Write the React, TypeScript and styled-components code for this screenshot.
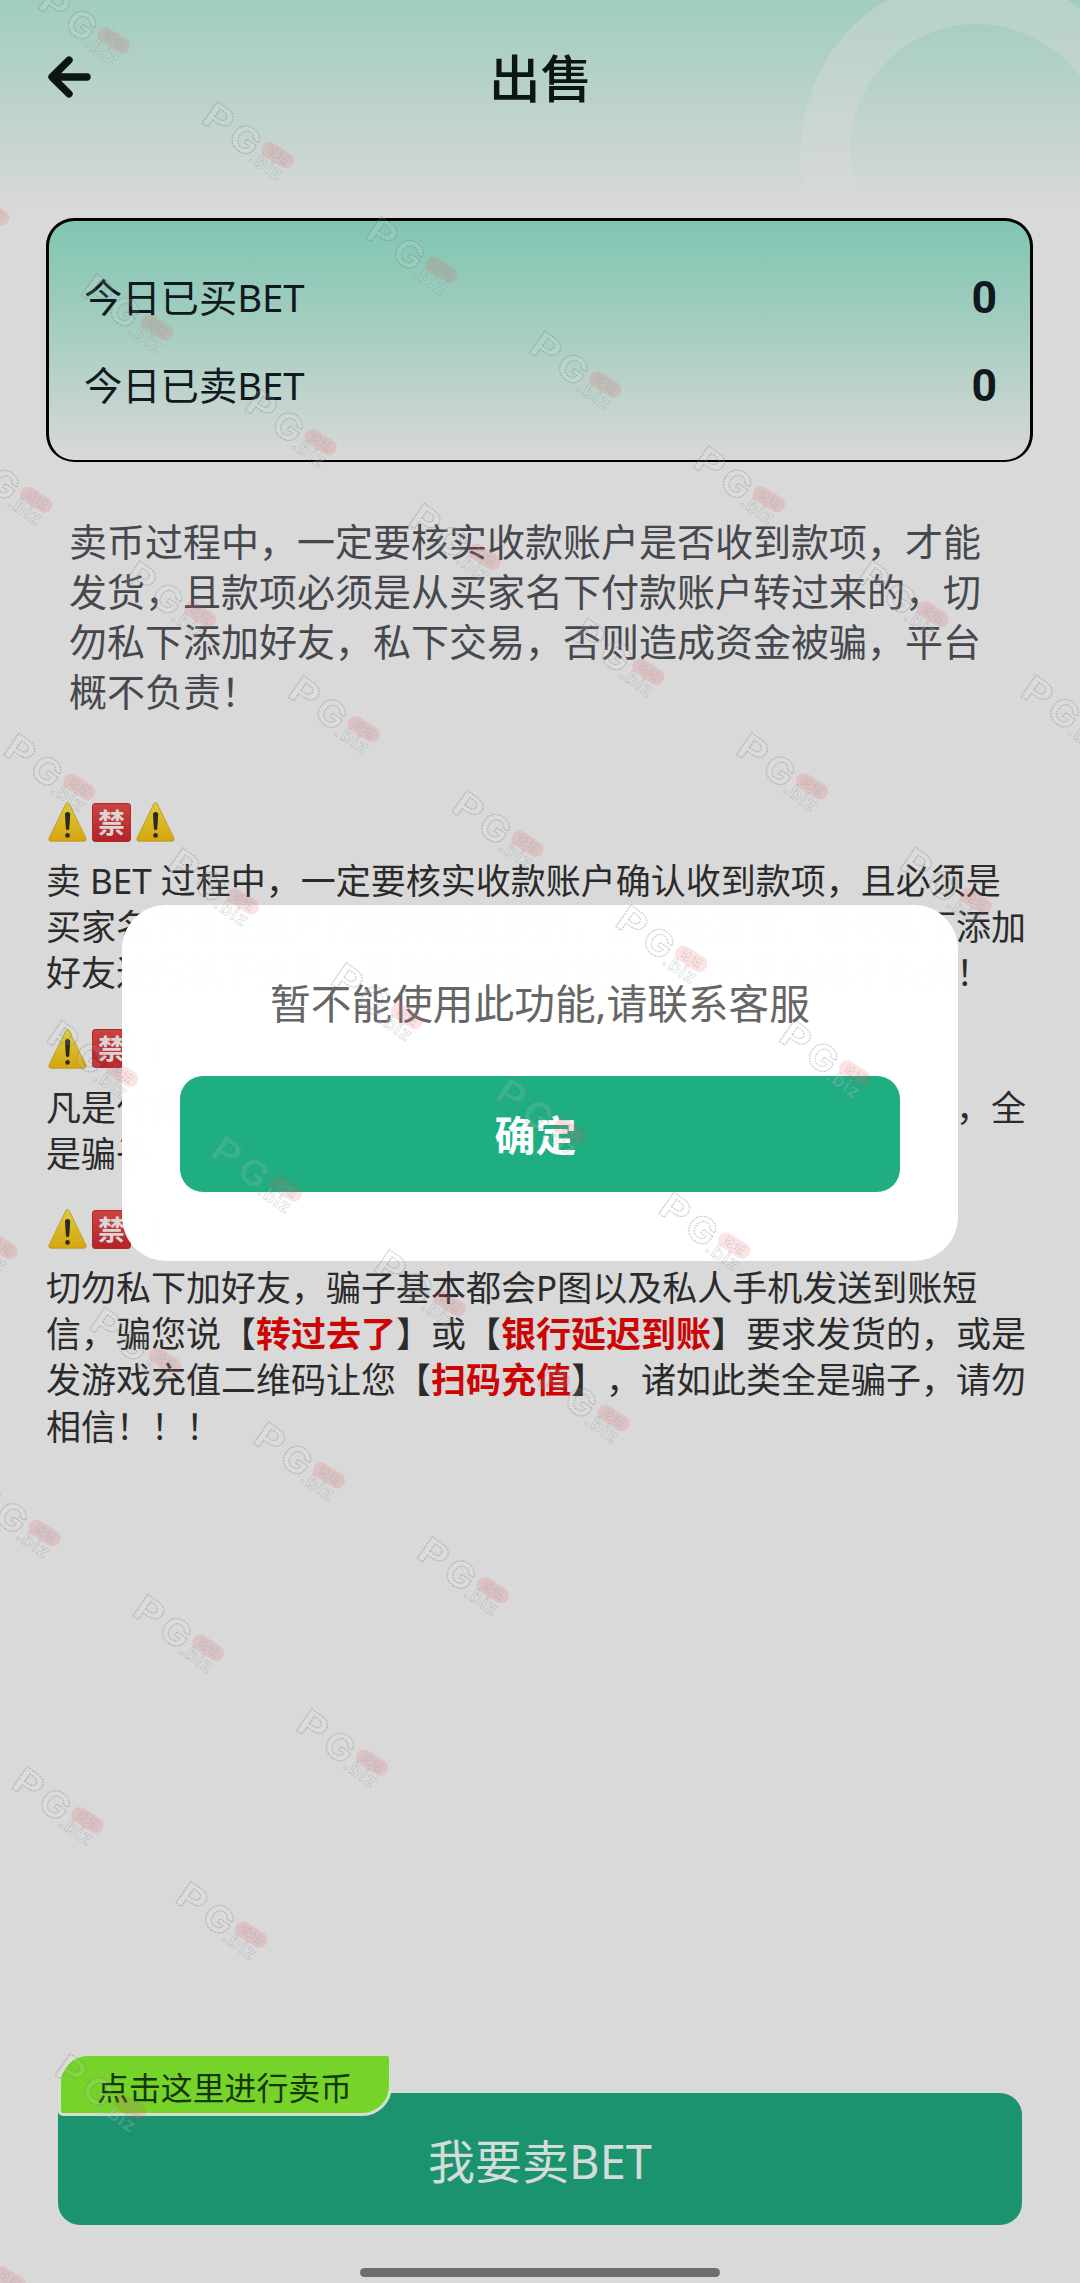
import React from "react";
import styled, { createGlobalStyle } from "styled-components";

const Global = createGlobalStyle`
  *, *::before, *::after { box-sizing: border-box; }
  html, body { margin: 0; padding: 0; background: #d9d9d9; }
  p { margin: 0; }
  button { border: 0; margin: 0; padding: 0; font: inherit; }
`;

const Page = styled.div`
  position: relative;
  display: flex;
  flex-direction: column;
  width: 1080px;
  height: 2283px;
  overflow: hidden;
  background: linear-gradient(#a0cdbf 0px, #bbd2cb 100px, #d9d9d9 208px) #d9d9d9;
  font-family: "Noto Sans", "Noto Sans CJK SC", sans-serif;
  text-spacing-trim: space-all;
`;

const Ring = styled.div`
  position: absolute;
  top: -25px;
  left: 801px;
  width: 352px;
  height: 352px;
  border: 49px solid rgba(217, 217, 217, 0.38);
  border-radius: 50%;
  clip-path: inset(0 0 140px 0);
`;

const Header = styled.header`
  display: grid;
  grid-template-columns: 44px 1fr 44px;
  align-items: center;
  height: 154px;
  margin-bottom: 64px;
  padding: 0 47px;
  flex: none;
`;

const Title = styled.h1`
  margin: 0;
  padding: 2px 0 0 1px;
  text-align: center;
  font-size: 51.5px;
  font-weight: 500;
  line-height: 60px;
  color: #0b1512;
`;

const Card = styled.section`
  display: flex;
  flex-direction: column;
  justify-content: center;
  flex: none;
  height: 244px;
  margin: 0 47px 0 46px;
  padding: 0 33px 0 35px;
  border: solid #000;
  border-width: 3px 3px 2px;
  border-radius: 28px;
  background: linear-gradient(#80c6b2 0%, #a2cdbf 42%, #d8d9d8 100%);
`;

const StatRow = styled.div`
  display: flex;
  align-items: center;
  justify-content: space-between;
  height: 88px;
  color: #101820;
`;

const StatLabel = styled.span`
  padding-bottom: 2px;
  font-size: 38.3px;
`;

const StatValue = styled.span`
  padding-top: 2px;
  font-family: Roboto, "Noto Sans", sans-serif;
  font-size: 44.5px;
  font-weight: 700;
`;

const Intro = styled.p`
  flex: none;
  width: 930px;
  margin: 54px 0 0 69px;
  font-size: 38px;
  line-height: 50px;
  color: #46484e;
`;

const Notices = styled.div`
  display: flex;
  flex-direction: column;
  gap: 29px;
  margin: 83px 0 0 46px;
  width: 1000px;
`;

const Notice = styled.section`
  display: flex;
  flex-direction: column;
  gap: 12.8px;
`;

const NoticeText = styled.p`
  font-size: 35px;
  line-height: 46.2px;
  color: #2b2b2b;
  white-space: nowrap;
`;

const Red = styled.b`
  font-weight: 700;
  color: #cc0404;
`;

const Blank = styled.span`
  display: inline-block;
  width: 22em;
`;

const Signs = styled.div`
  display: flex;
  align-items: center;
  gap: 5px;
  height: 46.2px;
  padding-left: 2px;
`;

const BanBox = styled.span`
  display: flex;
  align-items: center;
  justify-content: center;
  width: 39px;
  height: 39px;
  border: 1px solid #b02a2a;
  border-radius: 3px;
  background: linear-gradient(#cb4440, #b32428);
  font-size: 27px;
  line-height: 27px;
  font-weight: 700;
  color: #ddd5d5;
`;

const Footer = styled.footer`
  position: relative;
  display: flex;
  flex-direction: column;
  align-items: center;
  margin-top: auto;
  flex: none;
`;

const SellButton = styled.button`
  width: 964px;
  height: 132px;
  padding-bottom: 2px;
  border-radius: 22px;
  background: #1b936e;
  font-size: 47px;
  color: #d3dcd9;
`;

const Tag = styled.span`
  position: absolute;
  top: -40px;
  left: 58px;
  display: flex;
  align-items: center;
  width: 334px;
  height: 63px;
  padding: 2px 0 0 36px;
  border: 3px solid #d5ded2;
  border-radius: 30px 5px 30px 5px;
  background: #75d32a;
  font-size: 31.9px;
  color: #163607;
`;

const HomeBar = styled.div`
  width: 360px;
  height: 9px;
  margin: 43px 0 6px;
  border-radius: 5px;
  background: #6e6e6e;
`;

const Overlay = styled.div`
  position: absolute;
  inset: 0;
  display: flex;
  justify-content: center;
  align-items: flex-start;
  padding-top: 905px;
`;

const Modal = styled.div`
  display: flex;
  flex-direction: column;
  align-items: center;
  width: 836px;
  height: 356px;
  padding: 68px 58px 0;
  border-radius: 44px;
  background: rgba(255, 255, 255, 0.996);
`;

const ModalText = styled.p`
  height: 103px;
  font-size: 40.7px;
  line-height: 60px;
  color: #666;
`;

const Confirm = styled.button`
  width: 720px;
  height: 116px;
  padding: 0 9px 2px 0;
  border-radius: 23px;
  background: #1eae82;
  font-size: 41px;
  font-weight: 700;
  color: #fff;
`;

const MarkLayer = styled.svg`
  position: absolute;
  inset: 0;
  pointer-events: none;
`;

function Back() {
  return (
    <svg width="44" height="44" viewBox="0 0 44 44" fill="none" stroke="#0b1512" strokeWidth="7.4" strokeLinecap="round" strokeLinejoin="round">
      <path d="M22 5.2 5 22l17 16.8" />
      <path d="M7 22h33" />
    </svg>
  );
}

function Warning() {
  return (
    <svg width="39" height="40" viewBox="0 0 39 40">
      <defs>
        <linearGradient id="warn" x1="0" y1="0" x2="0" y2="1">
          <stop offset="0" stopColor="#dccb3c" />
          <stop offset="1" stopColor="#d6a50f" />
        </linearGradient>
      </defs>
      <path d="M18 1.4q1.5-1.6 3 0L38 36.2q.8 2.8-1.8 3H2.8Q.2 39 1 36.2Z" fill="url(#warn)" stroke="#b59b27" strokeWidth=".9" />
      <path d="M17 12.6a2.6 2.6 0 0 1 5.2 0l-.9 13.8a1.7 1.7 0 0 1-3.4 0Z" fill="#2d2b20" />
      <circle cx="19.6" cy="33.4" r="2.3" fill="#2d2b20" />
    </svg>
  );
}

function SignRow() {
  return (
    <Signs>
      <Warning />
      <BanBox>禁</BanBox>
      <Warning />
    </Signs>
  );
}

// Marks sit on a skewed lattice that stops at the lower-right diagonal.
const marks: { x: number; y: number }[] = [];
for (let j = 0; j <= 9; j++) {
  for (let i = -4; i <= 6 - j; i++) {
    const x = 114 + 163.75 * i + 43 * j;
    const y = 40.5 + 114.7 * i + 287 * j;
    if (x > -20 && x < 1180 && y > -30 && y < 2340) marks.push({ x, y });
  }
}

function Mark({ x, y }: { x: number; y: number }) {
  return (
    <g transform={`translate(${x} ${y}) rotate(35)`}>
      <g fontFamily="Inter, sans-serif" fontWeight="700" fontSize="36" textAnchor="middle" fill="rgba(255,255,255,0.1)" stroke="rgba(105,112,118,0.36)" strokeWidth="1.2" strokeDasharray="1.8 0.9">
        <text transform="translate(-69 17) scale(1.2 1)">P</text>
        <text transform="translate(-35.5 18.5) scale(1.08 1)">G</text>
      </g>
      <rect x="-17.5" y="-8" width="35" height="16" rx="8" transform="rotate(-3)" fill="rgba(250,70,80,0.15)" />
      <text x="0" y="4.5" fontFamily="Noto Sans CJK SC, sans-serif" fontSize="12" fontWeight="500" textAnchor="middle" fill="rgba(130,170,160,0.28)">论坛</text>
      <text x="-22" y="21.5" fontFamily="Inter, sans-serif" fontSize="19" fontWeight="600" letterSpacing="1" fill="rgba(255,255,255,0.18)" stroke="rgba(105,112,118,0.26)" strokeWidth=".8">.biz</text>
    </g>
  );
}

export default function App() {
  return (
    <Page>
      <Global />
      <Ring />
      <Header>
        <Back />
        <Title>出售</Title>
      </Header>
      <Card>
        <StatRow>
          <StatLabel>今日已买BET</StatLabel>
          <StatValue>0</StatValue>
        </StatRow>
        <StatRow>
          <StatLabel>今日已卖BET</StatLabel>
          <StatValue>0</StatValue>
        </StatRow>
      </Card>
      <Intro>
        卖币过程中，一定要核实收款账户是否收到款项，才能<br />
        发货，且款项必须是从买家名下付款账户转过来的，切<br />
        勿私下添加好友，私下交易，否则造成资金被骗，平台<br />
        概不负责！
      </Intro>
      <Notices>
        <Notice>
          <SignRow />
          <NoticeText>
            卖 BET 过程中，一定要核实收款账户确认收到款项，且必须是<br />
            买家名下付款账户付款转账过来的，才能去发货，切勿私下添加<br />
            好友进行私下交易，否则造成资金被骗，我方平台概不负责！
          </NoticeText>
        </Notice>
        <Notice>
          <SignRow />
          <NoticeText>
            凡是付款<Blank />，全<br />
            是骗子
          </NoticeText>
        </Notice>
        <Notice>
          <SignRow />
          <NoticeText>
            切勿私下加好友，骗子基本都会P图以及私人手机发送到账短<br />
            信，骗您说【<Red>转过去了</Red>】或【<Red>银行延迟到账</Red>】要求发货的，或是<br />
            发游戏充值二维码让您【<Red>扫码充值</Red>】，诸如此类全是骗子，请勿<br />
            相信！！！
          </NoticeText>
        </Notice>
      </Notices>
      <Footer>
        <SellButton>我要卖BET</SellButton>
        <Tag>点击这里进行卖币</Tag>
        <HomeBar />
      </Footer>
      <Overlay>
        <Modal>
          <ModalText>暂不能使用此功能,请联系客服</ModalText>
          <Confirm>确定</Confirm>
        </Modal>
      </Overlay>
      <MarkLayer width="1080" height="2283" viewBox="0 0 1080 2283">
        {marks.map((m) => (
          <Mark key={`${m.x}-${m.y}`} x={m.x} y={m.y} />
        ))}
      </MarkLayer>
    </Page>
  );
}
